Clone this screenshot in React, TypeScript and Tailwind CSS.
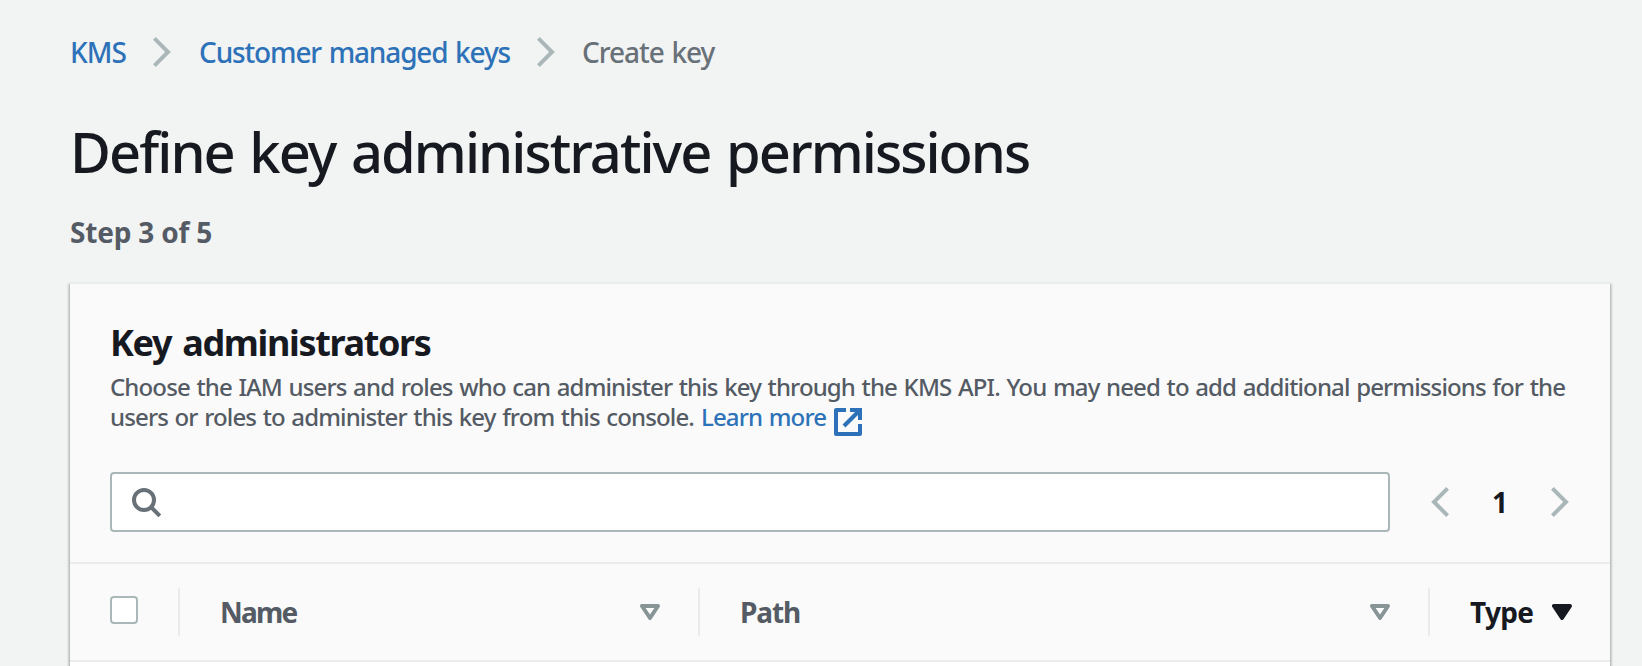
function Chevron({ left = false }: { left?: boolean }) {
  return (
    <svg width="18" height="30" viewBox="0 0 18 30" fill="none" className="shrink-0">
      <path
        d={left ? "M16.6 1.4 3 15l13.6 13.6" : "M1.4 1.4 15 15 1.4 28.6"}
        stroke="#aab7b8"
        strokeWidth="4"
      />
    </svg>
  );
}

function SortIcon({ active = false }: { active?: boolean }) {
  const color = active ? "#16191f" : "#879596";
  return (
    <svg width="20" height="16" viewBox="0 0 20 16" className="shrink-0">
      <path
        d="M2 2H18L10 14Z"
        fill={active ? color : "#ffffff"}
        stroke={color}
        strokeWidth="4"
        strokeLinejoin="round"
      />
    </svg>
  );
}

function SearchIcon() {
  return (
    <svg width="30" height="30" viewBox="0 0 30 30" fill="none" stroke="#687078" strokeWidth="4" className="mt-0.5">
      <circle cx="12" cy="12" r="10" />
      <path d="m18.8 18.8 9 9" />
    </svg>
  );
}

function ExternalIcon() {
  return (
    <svg width="28" height="28" viewBox="0 0 28 28" fill="none" stroke="#2d72b8" strokeWidth="4">
      <path d="M12 2H2v24h24V16" strokeLinejoin="round" />
      <path d="M16 2h10v10" />
      <path d="M10 18 26 2" />
    </svg>
  );
}

function Divider() {
  return <span className="h-12 w-0.5 shrink-0 bg-[#ebebeb]" />;
}

export default function App() {
  return (
    <div className="h-[666px] overflow-hidden bg-[#f2f3f3] pt-8 pr-8 pl-[70px] font-['Noto_Sans','Open_Sans',sans-serif] text-[28px] leading-10 font-medium whitespace-nowrap text-[#16191f]">
      <nav className="flex h-10 items-center">
        <a className="w-[83px] tracking-[-1px] text-[#2d72b8]">KMS</a>
        <Chevron />
        <a className="ml-7 w-[338px] tracking-[-1.15px] [word-spacing:1.5px] text-[#2d72b8]">
          Customer managed keys
        </a>
        <Chevron />
        <span className="ml-[27px] tracking-[-1.05px] [word-spacing:1.5px] text-[#687078]">Create key</span>
      </nav>
      <h1 className="mt-[47px] text-[56px] leading-[64px] tracking-[-1.95px] [word-spacing:3px]">
        Define key administrative permissions
      </h1>
      <p className="mt-[29px] font-bold tracking-[-0.2px] text-[#545b64]">Step 3 of 5</p>

      <main className="mt-[30px] h-[400px] border-t-2 border-[#eaeded] bg-white shadow-[0_2px_2px_rgba(0,7,22,0.3),2px_2px_2px_rgba(0,7,22,0.15),-2px_2px_2px_rgba(0,7,22,0.15)]">
        <header className="h-[280px] border-b-2 border-[#ebebeb] bg-[#fafafa] px-10 pt-[37px]">
          <h2 className="text-[36px] leading-[44px] font-bold tracking-[-1.35px] [word-spacing:3px]">
            Key administrators
          </h2>
          <p className="mt-[7px] text-2xl leading-[30px] tracking-[-0.87px] [word-spacing:1.2px] text-[#545b64]">
            Choose the IAM users and roles who can administer this key through the KMS API. You may need to add
            additional permissions for the
            <br />
            <span className="flex h-[30px]">
              <span className="w-[591px]">users or roles to administer this key from this console.</span>
              <a className="flex text-[#2d72b8]">
                <span className="w-[133px]">Learn more</span>
                <span className="mt-1.5">
                  <ExternalIcon />
                </span>
              </a>
            </span>
          </p>
          <div className="mt-10 flex h-[60px] items-center">
            <div className="flex h-full w-[1280px] items-center rounded border-2 border-[#aab7b8] bg-white pl-5">
              <SearchIcon />
            </div>
            <div className="ml-[41px] flex items-center">
              <Chevron left />
              <span className="w-[102px] text-center font-bold">1</span>
              <Chevron />
            </div>
          </div>
        </header>

        <div className="flex h-[98px] items-center border-b-2 border-[#ebebeb] bg-[#fafafa] font-bold text-[#545b64]">
          <div className="flex w-[108px] items-center pl-10">
            <span className="mb-1 size-7 rounded border-2 border-[#aab7b8] bg-white" />
          </div>
          <div className="flex w-[520px] items-center pr-[38px]">
            <Divider />
            <span className="ml-10 flex-1 tracking-[-1.8px]">Name</span>
            <SortIcon />
          </div>
          <div className="flex w-[730px] items-center pr-[38px]">
            <Divider />
            <span className="ml-10 flex-1 tracking-[-1.1px]">Path</span>
            <SortIcon />
          </div>
          <div className="flex flex-1 items-center pr-[38px] text-[#16191f]">
            <Divider />
            <span className="ml-10 flex-1 tracking-[-0.7px]">Type</span>
            <SortIcon active />
          </div>
        </div>
      </main>
    </div>
  );
}
